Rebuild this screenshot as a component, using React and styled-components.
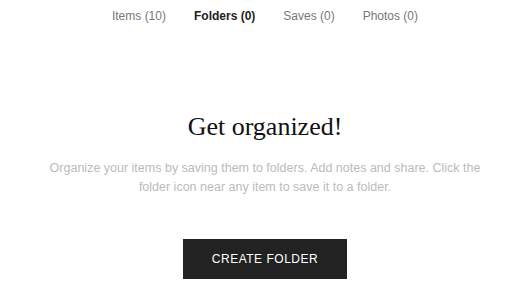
import styled, { createGlobalStyle } from "styled-components";

const GlobalStyle = createGlobalStyle`
  body {
    margin: 0;
    background: #fff;
    font-family: "Liberation Sans", Arial, sans-serif;
  }
`;

const Page = styled.div`
  box-sizing: border-box;
  width: 516px;
  height: 308px;
  padding-left: 14px;
  display: flex;
  flex-direction: column;
  align-items: center;
`;

const Tabs = styled.nav`
  display: flex;
  gap: 28px;
  padding-top: 8px;
  height: 16px;
`;

const Tab = styled.span`
  font-size: 12px;
  line-height: 16px;
  color: ${(p) => (p.active ? "#222" : "#777")};
  font-weight: ${(p) => (p.active ? 700 : 400)};
  cursor: pointer;
`;

const Empty = styled.section`
  display: flex;
  flex-direction: column;
  align-items: center;
  padding-top: 88px;
`;

const Heading = styled.h2`
  margin: 0;
  font-family: "Liberation Serif", "Times New Roman", serif;
  font-weight: 400;
  font-size: 26px;
  line-height: 30px;
  color: #111;
`;

const Text = styled.p`
  margin: 17px 0 0;
  width: 450px;
  text-align: center;
  font-size: 12.5px;
  line-height: 19px;
  color: #bbb;
`;

const Button = styled.button`
  margin-top: 42px;
  width: 164px;
  height: 40px;
  border: none;
  background: #222;
  color: #fff;
  font-family: "Liberation Sans", Arial, sans-serif;
  font-size: 12px;
  letter-spacing: 0.5px;
  cursor: pointer;
`;

export default function App() {
  const tabs = [
    { label: "Items (10)" },
    { label: "Folders (0)", active: true },
    { label: "Saves (0)" },
    { label: "Photos (0)" },
  ];
  return (
    <Page>
      <GlobalStyle />
      <Tabs>
        {tabs.map((t) => (
          <Tab key={t.label} active={t.active}>
            {t.label}
          </Tab>
        ))}
      </Tabs>
      <Empty>
        <Heading>Get organized!</Heading>
        <Text>
          Organize your items by saving them to folders. Add notes and share. Click the
          folder icon near any item to save it to a folder.
        </Text>
        <Button>CREATE FOLDER</Button>
      </Empty>
    </Page>
  );
}
